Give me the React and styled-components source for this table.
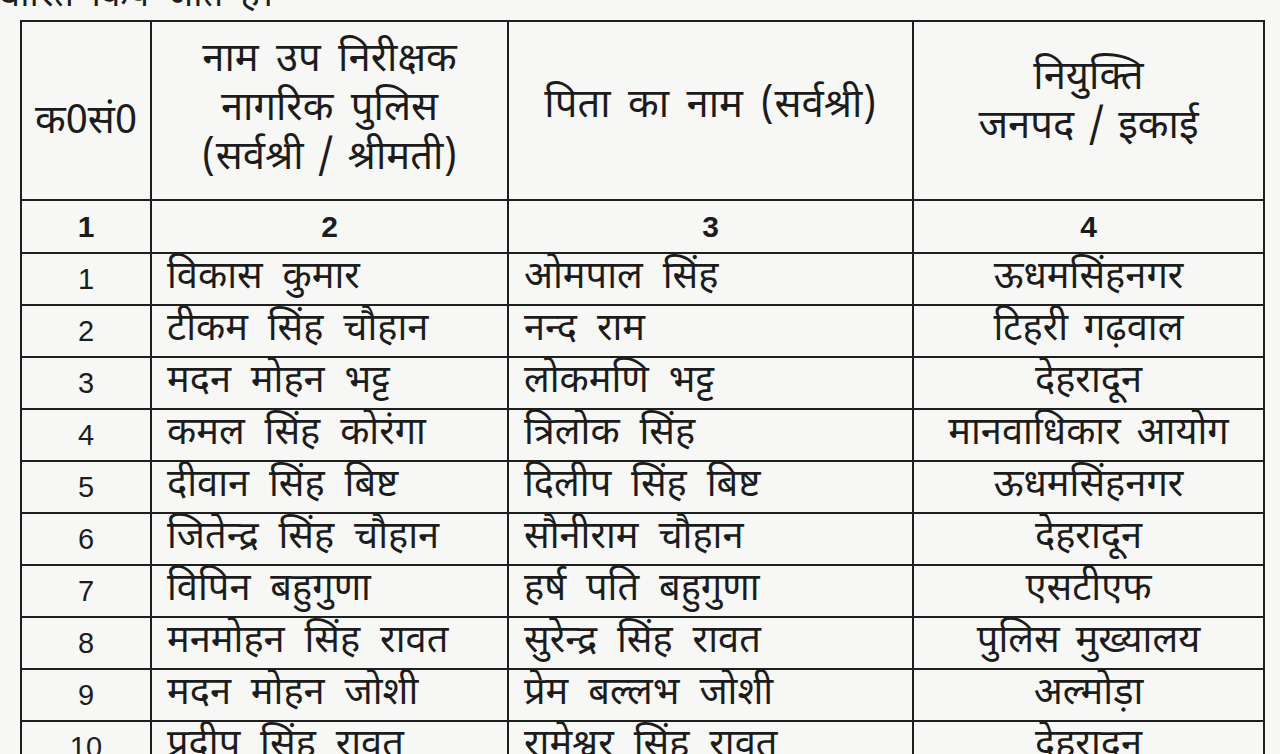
import styled, { createGlobalStyle } from 'styled-components';

const GlobalStyle = createGlobalStyle`
  html, body {
    margin: 0;
    padding: 0;
    background: #f7f7f5;
  }
  body {
    font-family: "Noto Sans Devanagari", "Lohit Devanagari", "Noto Sans", "Liberation Sans", sans-serif;
    color: #1c1c1c;
    overflow: hidden;
  }
`;

const Page = styled.div`
  width: 1280px;
  height: 754px;
  overflow: hidden;
`;

const Caption = styled.p`
  margin: -24px 0 0 -2px;
  height: 44px;
  line-height: 44px;
  font-size: 36px;
  word-spacing: 8px;
  white-space: nowrap;
  overflow: hidden;
`;

const Table = styled.table`
  margin-left: 20px;
  width: 1243px;
  border-collapse: collapse;
  table-layout: fixed;
  border: 2px solid #1e1e1e;
`;

const Col = styled.col`
  width: ${(p) => p.$w}px;
`;

const HeadCell = styled.th`
  height: 177px;
  border: 2px solid #1e1e1e;
  font-weight: 400;
  font-size: 40px;
  line-height: 49px;
  text-align: center;
  vertical-align: middle;
  padding: 0 4px;
  word-spacing: 7px;
  white-space: nowrap;
`;

const HeadText = styled.div`
  margin-bottom: ${(p) => p.$lift || 0}px;
  margin-top: ${(p) => p.$drop || 0}px;
`;

const Slash = styled.span`
  margin: 0 -4px;
`;

const NumCell = styled.td`
  height: 51px;
  border: 2px solid #1e1e1e;
  font-family: "Liberation Sans", Arial, sans-serif;
  font-size: 30px;
  font-weight: 600;
  line-height: 51px;
  text-align: center;
  padding: 0;
`;

const Cell = styled.td`
  height: 50px;
  border: 2px solid #1e1e1e;
  font-size: 38px;
  line-height: 50px;
  padding: 0 0 0 ${(p) => (p.$center ? 0 : 15)}px;
  text-align: ${(p) => (p.$center ? 'center' : 'left')};
  white-space: nowrap;
  overflow: hidden;
  word-spacing: ${(p) => (p.$center ? 6 : 10)}px;
`;

const SerialCell = styled.td`
  height: 50px;
  border: 2px solid #1e1e1e;
  font-family: "Liberation Sans", Arial, sans-serif;
  font-size: 29px;
  line-height: 50px;
  text-align: center;
  padding: 0;
`;

const rows = [
  ['1', 'विकास कुमार', 'ओमपाल सिंह', 'ऊधमसिंहनगर'],
  ['2', 'टीकम सिंह चौहान', 'नन्द राम', 'टिहरी गढ़वाल'],
  ['3', 'मदन मोहन भट्ट', 'लोकमणि भट्ट', 'देहरादून'],
  ['4', 'कमल सिंह कोरंगा', 'त्रिलोक सिंह', 'मानवाधिकार आयोग'],
  ['5', 'दीवान सिंह बिष्ट', 'दिलीप सिंह बिष्ट', 'ऊधमसिंहनगर'],
  ['6', 'जितेन्द्र सिंह चौहान', 'सौनीराम चौहान', 'देहरादून'],
  ['7', 'विपिन बहुगुणा', 'हर्ष पति बहुगुणा', 'एसटीएफ'],
  ['8', 'मनमोहन सिंह रावत', 'सुरेन्द्र सिंह रावत', 'पुलिस मुख्यालय'],
  ['9', 'मदन मोहन जोशी', 'प्रेम बल्लभ जोशी', 'अल्मोड़ा'],
  ['10', 'प्रदीप सिंह रावत', 'रामेश्वर सिंह रावत', 'देहरादून'],
];

export default function App() {
  return (
    <Page>
      <GlobalStyle />
      <Caption>धारित किये जाते हैं।</Caption>
      <Table>
        <colgroup>
          <Col $w={130} />
          <Col $w={357} />
          <Col $w={405} />
          <Col $w={351} />
        </colgroup>
        <thead>
          <tr>
            <HeadCell>
              <HeadText $drop={26}>क0सं0</HeadText>
            </HeadCell>
            <HeadCell>
              <HeadText>
                नाम उप निरीक्षक
                <br />
                नागरिक पुलिस
                <br />
                (सर्वश्री<Slash> / </Slash>श्रीमती)
              </HeadText>
            </HeadCell>
            <HeadCell>
              <HeadText $lift={6}>पिता का नाम (सर्वश्री)</HeadText>
            </HeadCell>
            <HeadCell>
              <HeadText $lift={14}>
                नियुक्ति
                <br />
                जनपद<Slash> / </Slash>इकाई
              </HeadText>
            </HeadCell>
          </tr>
          <tr>
            <NumCell>1</NumCell>
            <NumCell>2</NumCell>
            <NumCell>3</NumCell>
            <NumCell>4</NumCell>
          </tr>
        </thead>
        <tbody>
          {rows.map(([n, name, father, unit]) => (
            <tr key={n}>
              <SerialCell>{n}</SerialCell>
              <Cell>{name}</Cell>
              <Cell>{father}</Cell>
              <Cell $center>{unit}</Cell>
            </tr>
          ))}
        </tbody>
      </Table>
    </Page>
  );
}
